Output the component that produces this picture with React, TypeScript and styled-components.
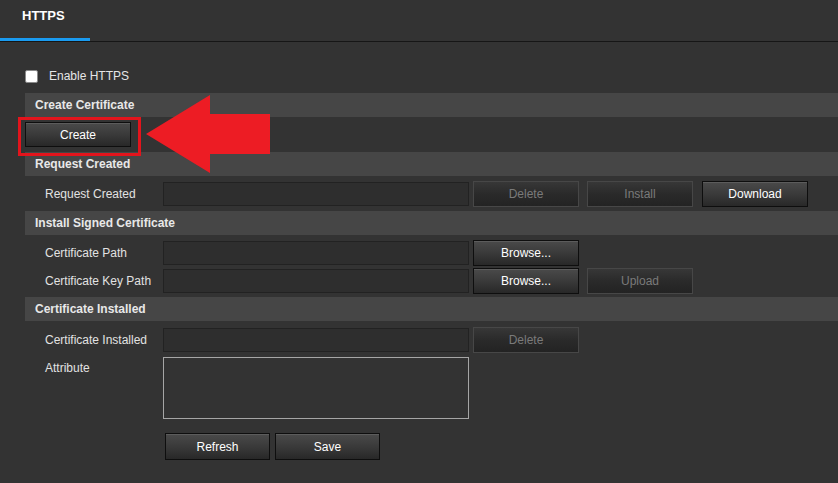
import React from "react";
import styled, { createGlobalStyle } from "styled-components";

const Global = createGlobalStyle`
  html, body { margin: 0; padding: 0; background: #333333; }
  body { font-family: "Liberation Sans", Arial, sans-serif; font-size: 12px; color: #e0e0e0; }
  * { box-sizing: border-box; }
`;

const Page = styled.div`
  position: relative;
  width: 838px;
  height: 483px;
  background: #333333;
  overflow: hidden;
`;

const Header = styled.div`
  height: 42px;
  display: flex;
  border-bottom: 1px solid #161616;
`;

const Tab = styled.div`
  width: 90px;
  height: 41px;
  padding: 8px 0 0 22px;
  font-size: 13px;
  font-weight: bold;
  color: #ffffff;
  border-bottom: 3px solid #1a9bf0;
  margin-bottom: -1px;
`;

const Content = styled.div`
  display: flex;
  flex-direction: column;
  padding-left: 25px;
`;

const CheckRow = styled.label`
  display: flex;
  align-items: center;
  height: 20px;
  margin-top: 24px;
  margin-bottom: 7px;
  gap: 11px;
  color: #e6e6e6;
`;

const CheckBox = styled.span`
  display: block;
  width: 13px;
  height: 13px;
  background: #ffffff;
  border: 1px solid #8a8a8a;
  border-radius: 2px;
`;

const Band = styled.div`
  height: 24px;
  display: flex;
  align-items: center;
  padding-left: 10px;
  background: #464646;
  font-weight: bold;
  color: #e8e8e8;
`;

const Block = styled.div<{ $top: number; $bottom: number; $gap?: number }>`
  display: flex;
  flex-direction: column;
  gap: ${(p) => p.$gap ?? 1}px;
  padding-top: ${(p) => p.$top}px;
  padding-bottom: ${(p) => p.$bottom}px;
`;

const Row = styled.div<{ $align?: string; $indent?: number }>`
  display: flex;
  align-items: ${(p) => p.$align ?? "center"};
  padding-left: ${(p) => p.$indent ?? 20}px;
`;

const Label = styled.div<{ $padTop?: number }>`
  width: 118px;
  flex: none;
  color: #e2e2e2;
  padding-top: ${(p) => p.$padTop ?? 0}px;
`;

const Input = styled.div`
  width: 306px;
  height: 24px;
  background: #2e2e2e;
  border: 1px solid #222222;
  flex: none;
`;

const TextArea = styled.div`
  width: 306px;
  height: 62px;
  background: #333333;
  border: 1px solid #a6a6a6;
  flex: none;
`;

const Button = styled.button<{ $disabled?: boolean; $ml?: number; $h?: number; $w?: number }>`
  width: ${(p) => p.$w ?? 106}px;
  height: ${(p) => p.$h ?? 26}px;
  margin-left: ${(p) => p.$ml ?? 0}px;
  flex: none;
  font-family: "Liberation Sans", Arial, sans-serif;
  font-size: 12px;
  padding: 0;
  cursor: default;
  color: ${(p) => (p.$disabled ? "#7a7a7a" : "#ffffff")};
  background: ${(p) =>
    p.$disabled
      ? "linear-gradient(#373737, #2a2a2a 50%, #232323)"
      : "linear-gradient(#4a4a4a, #3a3a3a 50%, #282828)"};
  border: 1px solid ${(p) => (p.$disabled ? "#474747" : "#0e0e0e")};
  box-shadow: ${(p) => (p.$disabled ? "none" : "inset 0 1px 0 #5c5c5c")};
`;

const ButtonRow = styled.div`
  display: flex;
  gap: 5px;
  padding-left: 140px;
  margin-top: 14px;
`;

const Highlight = styled.div`
  position: absolute;
  left: 18px;
  top: 117px;
  width: 123px;
  height: 39px;
  border: 3px solid #e3141c;
  pointer-events: none;
`;

const Arrow = styled.svg`
  position: absolute;
  left: 146px;
  top: 95px;
  pointer-events: none;
`;

export default function App() {
  return (
    <Page>
      <Global />
      <Header>
        <Tab>HTTPS</Tab>
      </Header>
      <Content>
        <CheckRow>
          <CheckBox />
          Enable HTTPS
        </CheckRow>

        <Band>Create Certificate</Band>
        <Block $top={5} $bottom={5}>
          <Row $indent={0}>
            <Button $h={25}>Create</Button>
          </Row>
        </Block>

        <Band>Request Created</Band>
        <Block $top={5} $bottom={4}>
          <Row>
            <Label>Request Created</Label>
            <Input />
            <Button $disabled $ml={4}>Delete</Button>
            <Button $disabled $ml={8}>Install</Button>
            <Button $ml={9}>Download</Button>
          </Row>
        </Block>

        <Band>Install Signed Certificate</Band>
        <Block $top={5} $bottom={3} $gap={2}>
          <Row>
            <Label>Certificate Path</Label>
            <Input />
            <Button $ml={4}>Browse...</Button>
          </Row>
          <Row>
            <Label>Certificate Key Path</Label>
            <Input />
            <Button $ml={4}>Browse...</Button>
            <Button $disabled $ml={8}>Upload</Button>
          </Row>
        </Block>

        <Band>Certificate Installed</Band>
        <Block $top={6} $bottom={0} $gap={4}>
          <Row>
            <Label>Certificate Installed</Label>
            <Input />
            <Button $disabled $ml={4}>Delete</Button>
          </Row>
          <Row $align="flex-start">
            <Label $padTop={4}>Attribute</Label>
            <TextArea />
          </Row>
        </Block>
        <ButtonRow>
          <Button $h={27} $w={105}>Refresh</Button>
          <Button $h={27} $w={105}>Save</Button>
        </ButtonRow>
      </Content>

      <Highlight />
      <Arrow width="125" height="79" viewBox="0 0 125 79">
        <polygon points="0,39 64,0 64,19 124,19 124,59 64,59 64,78" fill="#ed1c24" />
      </Arrow>
    </Page>
  );
}
